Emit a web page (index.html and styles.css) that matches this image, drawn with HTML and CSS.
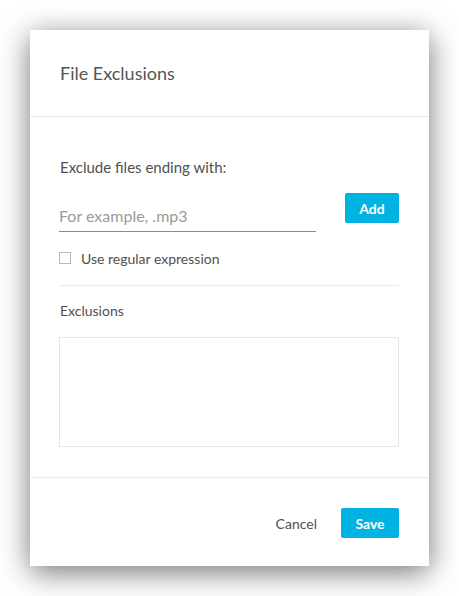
FILE: index.html
```html
<!DOCTYPE html>
<html>
<head>
<meta charset="utf-8">
<link rel="stylesheet" href="styles.css">
</head>
<body>
<div class="dialog">
  <div class="dialog-header">
    <h1 class="dialog-title">File Exclusions</h1>
  </div>
  <div class="dialog-body">
    <div class="field-label">Exclude files ending with:</div>
    <div class="add-row">
      <input class="ext-input" type="text" placeholder="For example, .mp3">
      <button class="btn btn-primary btn-add">Add</button>
    </div>
    <label class="check-row">
      <span class="checkbox"></span>
      <span class="check-label">Use regular expression</span>
    </label>
    <div class="divider"></div>
    <div class="section-label">Exclusions</div>
    <div class="exclusions-box"></div>
  </div>
  <div class="dialog-footer">
    <button class="btn btn-link">Cancel</button>
    <button class="btn btn-primary btn-save">Save</button>
  </div>
</div>
</body>
</html>
```

FILE: styles.css
```css
* { box-sizing: border-box; }
html, body { margin: 0; padding: 0; background: #fff; }
body {
  font-family: Lato, "Open Sans", "Liberation Sans", sans-serif;
  color: #505050;
  padding: 30px 30px 30px 30px;
}
.dialog {
  width: 399px;
  height: 536px;
  background: #fff;
  box-shadow: 0 6px 28px rgba(0,0,0,0.55);
  display: flex;
  flex-direction: column;
}
.dialog-header {
  height: 87px;
  border-bottom: 1px solid #ebebeb;
  display: flex;
  align-items: center;
  padding-left: 30px;
}
.dialog-title {
  margin: 0;
  font-size: 18px;
  font-weight: 400;
  color: #555;
  line-height: 20px;
}
.dialog-body {
  padding: 40px 30px 30px 29px;
  border-bottom: 1px solid #ebebeb;
}
.field-label, .section-label {
  font-size: 14px;
  line-height: 20px;
  height: 20px;
  padding-left: 1px;
}
.field-label { font-size: 15px; }
.add-row {
  margin-top: 16px;
  display: flex;
  justify-content: space-between;
  align-items: flex-start;
}
.ext-input {
  width: 257px;
  height: 39px;
  padding: 6px 0 0 0;
  border: none;
  border-bottom: 1px solid #8a8a8a;
  font-family: inherit;
  font-size: 16px;
  color: #444;
  outline: none;
  background: transparent;
}
.ext-input::placeholder { color: #9a9a9a; }
.btn {
  font-family: inherit;
  font-size: 14px;
  border: none;
  cursor: pointer;
  height: 30px;
  padding: 0;
}
.btn-primary {
  background: #00b3e3;
  color: #fff;
  font-weight: 700;
  border-radius: 2px;
}
.btn-add { width: 54px; }
.check-row {
  margin-top: 16px;
  height: 20px;
  display: flex;
  align-items: center;
  gap: 10px;
}
.checkbox {
  width: 12px;
  height: 12px;
  border: 1px solid #b8b8b8;
  background: #fff;
}
.check-label { font-size: 14px; color: #505050; }
.divider {
  margin-top: 17px;
  height: 1px;
  background: #ebebeb;
}
.section-label { margin-top: 15px; }
.exclusions-box {
  margin-top: 16px;
  height: 110px;
  border: 1px solid #e6e6e6;
}
.dialog-footer {
  flex: 1;
  display: flex;
  justify-content: flex-end;
  align-items: flex-start;
  padding: 30px 30px 0 0;
  gap: 12px;
}
.btn-link {
  background: transparent;
  color: #505050;
  padding: 0 12px;
}
.btn-save { width: 58px; }
```
